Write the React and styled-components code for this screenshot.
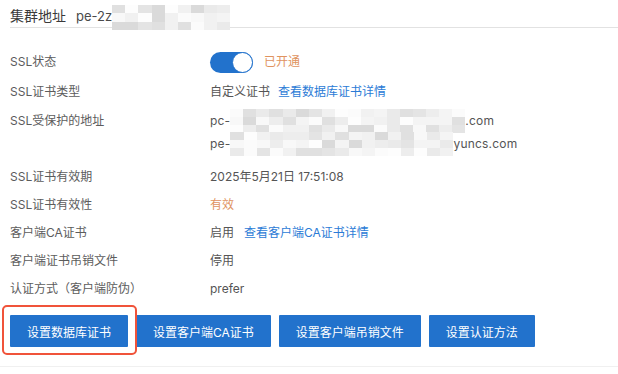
import styled, { createGlobalStyle } from 'styled-components'

const GlobalStyle = createGlobalStyle`
  html, body {
    margin: 0;
    padding: 0;
    background: #fff;
  }
  body {
    font-family: Inter, 'Noto Sans CJK SC', sans-serif;
    color: #555;
    -webkit-font-smoothing: antialiased;
  }
`

const shades = ['#e4e4e4', '#f1f1f1', '#f8f8f8', '#dadada', '#fbfbfb', '#eaeaea', '#ededed', '#f4f4f4', '#e0e0e0', '#fdfdfd']

function makeCells(count, seed) {
  const out = []
  let s = seed
  for (let i = 0; i < count; i++) {
    s = (s * 9301 + 49297) % 233280
    out.push(shades[Math.floor((s / 233280) * shades.length)])
  }
  return out
}

function Mosaic({ width, height, cols, rows, seed, className }) {
  const cells = makeCells(cols * rows, seed)
  return (
    <MosaicGrid
      className={className}
      style={{
        width,
        height,
        gridTemplateColumns: `repeat(${cols}, 1fr)`,
        gridTemplateRows: `repeat(${rows}, 1fr)`,
      }}
    >
      {cells.map((c, i) => (
        <MosaicCell key={i} style={{ background: c }} />
      ))}
    </MosaicGrid>
  )
}

function App() {
  return (
    <>
      <GlobalStyle />
      <Page>
        <Content>
          <Header>
            <Title>集群地址</Title>
            <HeaderId>pe-2z</HeaderId>
            <HeaderMosaic width={118} height={25} cols={9} rows={3} seed={17} />
          </Header>

          <Rows>
            <Row $after={2}>
              <Label>SSL状态</Label>
              <Value>
                <Toggle>
                  <Knob />
                </Toggle>
                <Status $tone='orange' $gap={11}>
                  已开通
                </Status>
              </Value>
            </Row>
            <Row $after={1}>
              <Label>SSL证书类型</Label>
              <Value>
                自定义证书<LinkText $gap={8}>查看数据库证书详情</LinkText>
              </Value>
            </Row>
            <Row $multi $after={6}>
              <Label>SSL受保护的地址</Label>
              <Addresses>
                <AddrLine>
                  pc-
                  <Mosaic width={235} height={24} cols={18} rows={3} seed={5} />
                  .com
                </AddrLine>
                <AddrLine>
                  pe-
                  <Mosaic width={223} height={24} cols={17} rows={3} seed={41} />
                  yuncs.com
                </AddrLine>
              </Addresses>
            </Row>
            <Row>
              <Label>SSL证书有效期</Label>
              <Value>2025年5月21日 17:51:08</Value>
            </Row>
            <Row>
              <Label>SSL证书有效性</Label>
              <Value>
                <Status $tone='orange'>有效</Status>
              </Value>
            </Row>
            <Row>
              <Label>客户端CA证书</Label>
              <Value>
                启用<LinkText $gap={10}>查看客户端CA证书详情</LinkText>
              </Value>
            </Row>
            <Row>
              <Label>客户端证书吊销文件</Label>
              <Value>停用</Value>
            </Row>
            <Row>
              <Label>认证方式（客户端防伪）</Label>
              <Value>prefer</Value>
            </Row>
          </Rows>
        </Content>

        <Footer>
          <Highlight>
            <Button>设置数据库证书</Button>
          </Highlight>
          <Button>设置客户端CA证书</Button>
          <Button>设置客户端吊销文件</Button>
          <Button>设置认证方法</Button>
        </Footer>
      </Page>
    </>
  )
}

const Page = styled.div`
  width: 618px;
  height: 374px;
  overflow: hidden;
`

const Content = styled.div`
  padding-left: 10px;
`

const Header = styled.div`
  display: flex;
  align-items: center;
  padding: 6px 0 1px;
  border-bottom: 1px solid #e2e2e2;
`

const Title = styled.span`
  font-size: 14px;
  line-height: 20px;
  color: #3a3a3a;
`

const HeaderId = styled.span`
  font-size: 13px;
  line-height: 20px;
  color: #4a4a4a;
  margin-left: 10px;
`

const MosaicGrid = styled.span`
  display: inline-grid;
  flex-shrink: 0;
`

const MosaicCell = styled.span`
  display: block;
`

const HeaderMosaic = styled(Mosaic)`
  margin: -1px 0 -4px;
`

const Rows = styled.div`
  display: flex;
  flex-direction: column;
  gap: 4px;
  margin-top: 22px;
`

const Row = styled.div`
  display: flex;
  align-items: ${(p) => (p.$multi ? 'flex-start' : 'center')};
  min-height: 24px;
  margin-bottom: ${(p) => p.$after || 0}px;
  font-size: 12px;
`

const Label = styled.div`
  width: 200px;
  flex-shrink: 0;
  line-height: 24px;
  color: #5c5c5c;
`

const Value = styled.div`
  display: flex;
  align-items: center;
  line-height: 24px;
  color: #555;
`

const Toggle = styled.span`
  display: inline-flex;
  justify-content: flex-end;
  align-items: center;
  width: 43px;
  height: 21px;
  border-radius: 11px;
  background: #2272cc;
`

const Knob = styled.span`
  width: 19px;
  height: 19px;
  border-radius: 50%;
  background: #fff;
  border: 1px solid #2272cc;
`

const Status = styled.span`
  color: ${(p) => (p.$tone === 'orange' ? '#e0935f' : '#555')};
  margin-left: ${(p) => p.$gap || 0}px;
`

const LinkText = styled.a`
  color: #2b7bd6;
  margin-left: ${(p) => p.$gap}px;
  cursor: pointer;
`

const Addresses = styled.div`
  display: flex;
  flex-direction: column;
`

const AddrLine = styled.div`
  display: flex;
  align-items: center;
  height: 23px;
  letter-spacing: 0.2px;
  color: #555;
`

const Footer = styled.div`
  display: flex;
  align-items: center;
  gap: 8px;
  padding: 14px 0 19px 10px;
  border-bottom: 1px solid #f0f0f0;
`

const Highlight = styled.span`
  position: relative;
  display: inline-flex;

  &::after {
    content: '';
    position: absolute;
    left: -8px;
    right: -9px;
    top: -10px;
    bottom: -8px;
    border: 2px solid #f0533a;
    border-radius: 5px;
    pointer-events: none;
  }
`

const Button = styled.button`
  height: 32px;
  padding: 0 17px;
  border: none;
  border-radius: 1px;
  background: #2272cc;
  color: #fff;
  font-family: Inter, 'Noto Sans CJK SC', sans-serif;
  font-size: 12px;
  cursor: pointer;
`

export default App
